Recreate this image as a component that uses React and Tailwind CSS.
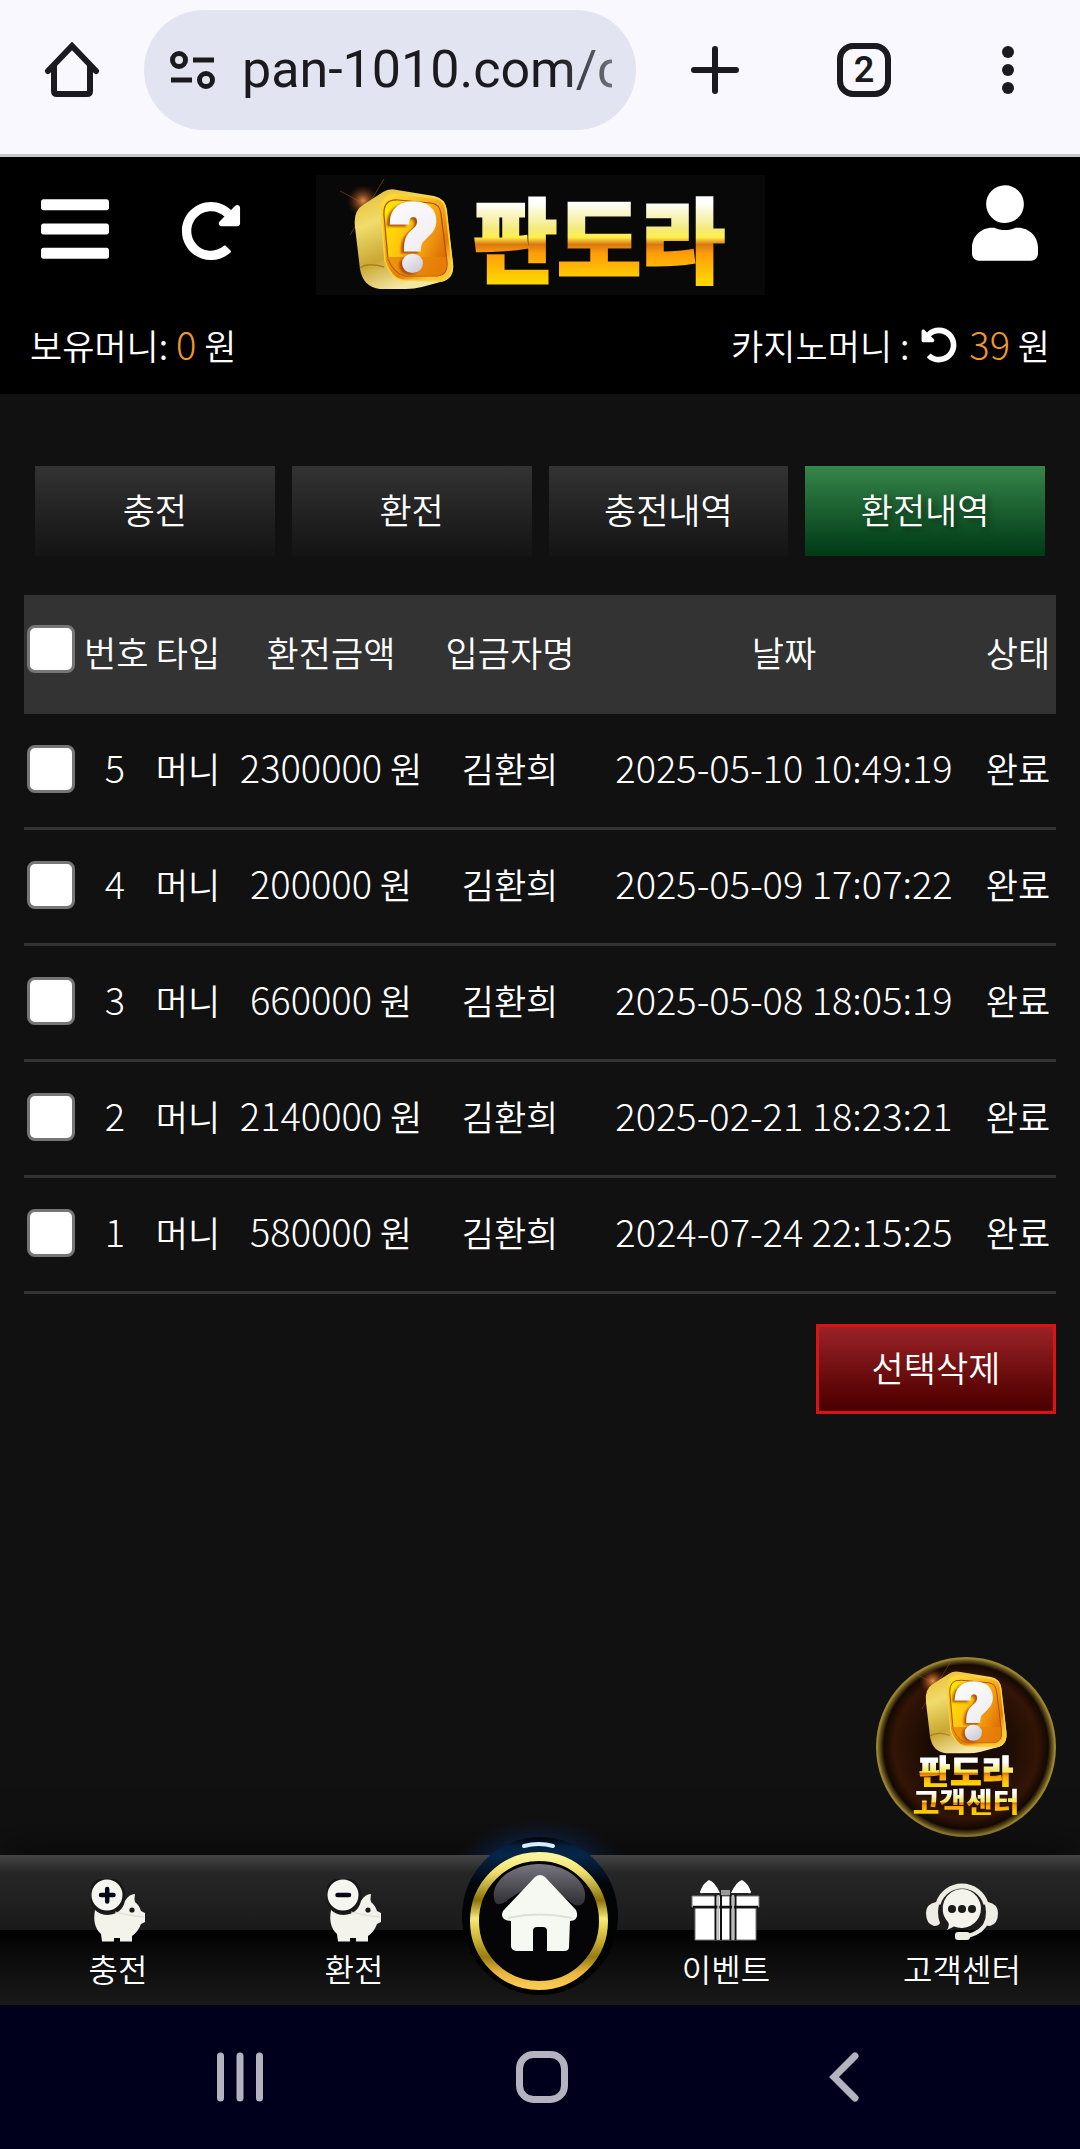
import { useState } from "react";
import { FaBars, FaRedoAlt, FaUndoAlt, FaUser } from "react-icons/fa";

const tabs = ["충전", "환전", "충전내역", "환전내역"];

const initialRows = [
  { id: 5, type: "머니", amount: 2300000, name: "김환희", date: "2025-05-10 10:49:19", status: "완료" },
  { id: 4, type: "머니", amount: 200000, name: "김환희", date: "2025-05-09 17:07:22", status: "완료" },
  { id: 3, type: "머니", amount: 660000, name: "김환희", date: "2025-05-08 18:05:19", status: "완료" },
  { id: 2, type: "머니", amount: 2140000, name: "김환희", date: "2025-02-21 18:23:21", status: "완료" },
  { id: 1, type: "머니", amount: 580000, name: "김환희", date: "2024-07-24 22:15:25", status: "완료" },
];

const goldText =
  "bg-clip-text text-transparent font-black bg-[linear-gradient(180deg,#ffffff_22%,#f3ea7a_45%,#fff04a_52%,#d9780f_58%,#ff9d0a_66%,#ffd400_90%)]";

const QuestionCube = ({ id, className }) => (
  <svg viewBox="-16 -10 118 112" className={className} aria-hidden="true">
    <defs>
      <linearGradient id={`${id}-side`} x1="0" y1="0" x2="0.4" y2="1">
        <stop offset="0" stopColor="#e8b92c" />
        <stop offset="0.35" stopColor="#f0dc6c" />
        <stop offset="0.7" stopColor="#c9a732" />
        <stop offset="1" stopColor="#f5e6a4" />
      </linearGradient>
      <linearGradient id={`${id}-rim`} x1="0" y1="0" x2="0.6" y2="1">
        <stop offset="0" stopColor="#ffe43a" />
        <stop offset="0.45" stopColor="#f7a91b" />
        <stop offset="0.8" stopColor="#e37a08" />
        <stop offset="1" stopColor="#ffc637" />
      </linearGradient>
      <linearGradient id={`${id}-face`} x1="0" y1="0.2" x2="1" y2="0.7">
        <stop offset="0" stopColor="#ffe600" />
        <stop offset="0.5" stopColor="#fdb813" />
        <stop offset="1" stopColor="#dd6a06" />
      </linearGradient>
      <linearGradient id={`${id}-mark`} x1="0" y1="0" x2="0.3" y2="1">
        <stop offset="0" stopColor="#ffffff" />
        <stop offset="0.7" stopColor="#f1eff2" />
        <stop offset="1" stopColor="#b9bdcc" />
      </linearGradient>
      <radialGradient id={`${id}-flare`}>
        <stop offset="0" stopColor="#ff9d4d" stopOpacity="0.9" />
        <stop offset="1" stopColor="#7a2f08" stopOpacity="0" />
      </radialGradient>
    </defs>
    <circle cx="9" cy="12" r="16" fill={`url(#${id}-flare)`} />
    <path d="M-14 2 24 22M30 -10 -4 46" stroke="#b0602c" strokeWidth="0.7" opacity="0.7" />
    <path
      d="M1 38Q-1 22 9 16L29 3Q35 -1 43 1L80 7Q91 9 93 21L99 74Q101 88 90 92L68 98Q60 100 52 100L26 100Q9 98 6 80Z"
      fill={`url(#${id}-side)`}
    />
    <path d="M27 23Q26 4 43 5L80 9Q91 10 92 22L98 74Q99 90 87 92L48 91Q37 89 31 72Z" fill={`url(#${id}-rim)`} stroke="#f8d536" strokeWidth="1.5" />
    <path d="M30 26Q29 10 44 11L77 14Q86 15 87 25L93 73Q94 86 84 87L51 87Q40 84 34 70Z" fill={`url(#${id}-face)`} stroke="#a9500a" strokeWidth="1.2" />
    <path d="M32 68L92 68 93 74Q93 86 84 87L51 87Q40 84 34 70Z" fill="#e8810a" opacity="0.75" />
    <path d="M6 79Q14 73 30 78" fill="none" stroke="#a88420" strokeWidth="1.5" />
    <text
      x="60"
      y="81"
      textAnchor="middle"
      fill={`url(#${id}-mark)`}
      stroke={`url(#${id}-mark)`}
      strokeWidth="4"
      className="font-[Roboto,sans-serif] font-black text-[92px] drop-shadow-[-3px_2px_1px_#b04e0e]"
    >
      ?
    </text>
  </svg>
);

const PigIcon = ({ minus }) => (
  <svg viewBox="0 0 54 63" className="w-[54px] h-[63px]" aria-hidden="true">
    <path
      d="M4 31Q9 36 17 36Q31 35 34 22Q38 15 44 15Q43 20 44 23Q48 26 50 32L54 34V43L50 45Q47 53 41 57V62.500H29V59H23V62.500H11L10 55Q1 47 4 31Z"
      fill="#f3f3ec"
    />
    <path d="M24 33Q40 37 53 38" fill="none" stroke="#dcdcd4" strokeWidth="1.2" />
    <circle cx="41" cy="31" r="2.600" fill="#1a1a1a" />
    <circle cx="16" cy="16" r="18" fill="#161616" />
    <circle cx="16" cy="16" r="15.500" fill="#f6f6f0" />
    <path d={minus ? "M10.500 16H22" : "M10 16H22.500M16.200 10V22.500"} stroke="#06061a" strokeWidth="4.500" strokeLinecap="round" />
  </svg>
);

const GiftIcon = () => (
  <svg viewBox="0 0 70 63" className="w-[70px] h-[63px]" aria-hidden="true">
    <path d="M9 13Q12 4 18 1Q24 3 29 14H12Q9 15 9 13ZM60 13Q57 4 51 1Q45 3 40 14H57Q60 15 60 13Z" fill="#fff" />
    <rect x="30" y="11" width="9" height="5" fill="#999" />
    <path d="M1 17H68V28H1Z" fill="#fff" stroke="#777" strokeWidth="1" />
    <path d="M4 29H65V61H4Z" fill="#fff" stroke="#777" strokeWidth="1" />
    <path d="M2 28H67" stroke="#111" strokeWidth="2.500" />
    <path d="M24.500 16V61M44.500 16V61M30 16V61M39.500 16V61" stroke="#111" strokeWidth="2" />
    <path d="M27.300 16V61M42 16V61" stroke="#bbb" strokeWidth="2" />
  </svg>
);

const SupportIcon = () => (
  <svg viewBox="0 0 72 63" className="w-[72px] h-[63px]" aria-hidden="true">
    <path d="M12 25A25 25 0 0 1 60 25" fill="none" stroke="#edede4" strokeWidth="5" />
    <path d="M61 42Q57 53 42 57" fill="none" stroke="#edede4" strokeWidth="4" />
    <path d="M10 23H14Q10 33 14 44Q13 47 8 47Q0 45 0 34Q0 25 10 23ZM62 23H58Q62 33 58 44Q59 47 64 47Q72 45 72 34Q72 25 62 23Z" fill="#edede4" />
    <rect x="29" y="53" width="15" height="8" rx="3" fill="#edede4" />
    <path d="M36 10A19.500 19.500 0 1 1 28 47.500L21 51Q24 46 22 43A19.500 19.500 0 0 1 36 10Z" fill="#f4f4ec" />
    <circle cx="26" cy="30" r="4" fill="#1b1b1b" />
    <circle cx="36" cy="30" r="4" fill="#1b1b1b" />
    <circle cx="46" cy="30" r="4" fill="#1b1b1b" />
  </svg>
);

const HomeBadge = () => (
  <svg viewBox="0 0 240 185" className="w-[240px] h-[185px] shrink-0" aria-hidden="true">
    <defs>
      <radialGradient id="home-glow">
        <stop offset="0.500" stopColor="#0c2a60" stopOpacity="0.8" />
        <stop offset="1" stopColor="#0c1c3c" stopOpacity="0" />
      </radialGradient>
      <linearGradient id="home-disc" x1="0" y1="0" x2="0" y2="1">
        <stop offset="0" stopColor="#020306" />
        <stop offset="0.060" stopColor="#04203e" />
        <stop offset="0.120" stopColor="#06264a" />
        <stop offset="0.300" stopColor="#020509" />
        <stop offset="1" stopColor="#000" />
      </linearGradient>
      <linearGradient id="home-ring" x1="0" y1="0" x2="0" y2="1">
        <stop offset="0" stopColor="#fbf49a" />
        <stop offset="0.120" stopColor="#efe070" />
        <stop offset="0.340" stopColor="#8c7208" />
        <stop offset="0.480" stopColor="#f6ea78" />
        <stop offset="0.600" stopColor="#d8c244" />
        <stop offset="0.780" stopColor="#987c10" />
        <stop offset="0.900" stopColor="#e8b440" />
        <stop offset="1" stopColor="#f8ca50" />
      </linearGradient>
      <linearGradient id="home-gloss" x1="0" y1="0" x2="0" y2="1">
        <stop offset="0" stopColor="#77757d" />
        <stop offset="1" stopColor="#2e2d33" />
      </linearGradient>
      <clipPath id="home-above">
        <rect width="240" height="35" />
      </clipPath>
    </defs>
    <ellipse cx="120" cy="60" rx="92" ry="62" fill="url(#home-glow)" clipPath="url(#home-above)" />
    <ellipse cx="120" cy="96" rx="78" ry="79" fill="url(#home-disc)" />
    <path d="M104 26Q119 22 133 26" fill="none" stroke="#d6f0ff" strokeWidth="4" strokeLinecap="round" />
    <circle cx="119" cy="101" r="64.500" fill="#050508" stroke="url(#home-ring)" strokeWidth="9" />
    <path d="M75 82C68 64 90 44 119 44S171 64 164 82Q158 90 148 80L120 60 90 78Q79 88 75 82Z" fill="url(#home-gloss)" />
    <path d="M115 57Q120 53 125 57L156 90Q160 100 150 101L149 127Q149 131 144 131H127V111Q127 107 123 107H117Q113 107 113 111V131H96Q91 130 91 126V101Q79 100 83 91Z" fill="#f6f8f2" />
    <path d="M88 98Q120 91 152 98" fill="none" stroke="#dcdfd8" strokeWidth="2" />
  </svg>
);

const BottomItem = ({ label, children }) => (
  <a href="#" className="flex flex-col items-center gap-2 pt-6">
    {children}
    <span className="text-[32px] leading-9">{label}</span>
  </a>
);

const BrowserBar = () => (
  <div className="flex items-center bg-[#f9f8ff] border-b-3 border-[#c6c5cc] h-[157px] pl-11 pr-[66px] pb-[14px] text-[#1b1b1f]">
    <button aria-label="홈">
      <svg viewBox="0 0 56 56" className="w-14 h-14" fill="none" stroke="currentColor" strokeWidth="6">
        <path d="M4 29 28 4 52 29" strokeLinecap="round" />
        <path d="M10 23V49Q10 52 13 52H43Q46 52 46 49V23" />
      </svg>
    </button>
    <div className="flex flex-1 min-w-0 items-center gap-[26px] ml-11 h-[120px] rounded-full bg-[#e2e4f1] pl-[26px] pr-6">
      <svg viewBox="0 0 46 40" className="w-[46px] h-10 shrink-0" fill="none" stroke="currentColor" strokeWidth="5">
        <circle cx="9" cy="10" r="6.500" />
        <circle cx="36" cy="30" r="6.500" />
        <path d="M23 10H44M1 30H22" />
      </svg>
      <input
        aria-label="주소"
        defaultValue="pan-1010.com/c"
        className="min-w-0 flex-1 bg-transparent outline-none text-[52px] font-normal font-[Roboto,sans-serif] mask-r-from-85% mask-r-to-120%"
      />
    </div>
    <button aria-label="새 탭" className="ml-[54px] shrink-0">
      <svg viewBox="0 0 50 50" className="w-[50px] h-[50px]" stroke="currentColor" strokeWidth="6" strokeLinecap="round">
        <path d="M25 4V46M4 25H46" />
      </svg>
    </button>
    <button className="ml-[97px] shrink-0 w-[54px] h-[54px] rounded-2xl border-6 border-current text-4xl leading-none font-semibold font-[Roboto,sans-serif] flex items-center justify-center">
      2
    </button>
    <button aria-label="메뉴" className="ml-[111px] flex flex-col gap-[6px]">
      <span className="w-3 h-3 rounded-full bg-current" />
      <span className="w-3 h-3 rounded-full bg-current" />
      <span className="w-3 h-3 rounded-full bg-current" />
    </button>
  </div>
);

const Digits = ({ children, className = "" }) => (
  <span className={`text-[38px] leading-10 font-light ${className}`}>{children}</span>
);

const checkboxClass =
  "appearance-none block w-12 h-12 ml-[3px] rounded-lg border-3 border-[#767676] bg-white checked:bg-blue-600";

export default function App() {
  const [rows, setRows] = useState(initialRows);
  const [selected, setSelected] = useState([]);
  const [activeTab, setActiveTab] = useState("환전내역");

  const toggle = (id) =>
    setSelected((prev) => (prev.includes(id) ? prev.filter((v) => v !== id) : [...prev, id]));

  const toggleAll = (e) => setSelected(e.target.checked ? rows.map((r) => r.id) : []);

  const deleteSelected = () => {
    setRows(rows.filter((r) => !selected.includes(r.id)));
    setSelected([]);
  };

  return (
    <div className="min-h-screen flex flex-col bg-[#111] text-white text-[35px] font-[350] font-['Noto_Sans_CJK_KR',sans-serif]">
      <BrowserBar />

      {/* Header */}
      <header className="bg-black pt-[18px]">
        <div className="grid grid-cols-[1fr_auto_1fr] items-center">
          <div className="flex items-center gap-[72px] pl-[41px] mb-3">
            <button aria-label="전체 메뉴">
              <FaBars className="w-[68px] h-[78px]" />
            </button>
            <button aria-label="새로고침" className="mt-1">
              <FaRedoAlt className="w-[60px] h-[60px]" />
            </button>
          </div>
          <a href="#" className="flex items-center gap-[18px] w-[449px] h-[120px] bg-[#080808] pl-[22px]">
            <QuestionCube id="logo" className="w-[118px] h-[112px] shrink-0" />
            <span className={`${goldText} text-[91px] leading-[116px] [-webkit-text-stroke:3px_transparent]`}>판도라</span>
          </a>
          <button aria-label="내 정보" className="justify-self-end mr-[42px] mb-6">
            <FaUser className="w-[66px] h-[76px]" />
          </button>
        </div>
        <div className="flex justify-between px-[30px] pt-6 pb-[23px] leading-[52px]">
          <p>
            보유머니: <Digits className="text-[#f0982c]">0</Digits> 원
          </p>
          <p className="flex items-center gap-3">
            카지노머니 :
            <button aria-label="카지노머니 갱신">
              <FaUndoAlt className="w-9 h-9" />
            </button>
            <span>
              <Digits className="text-[#f0982c]">39</Digits> 원
            </span>
          </p>
        </div>
      </header>

      <main className="relative flex-1 px-6 pt-[72px] pb-[200px]">
        {/* Tabs */}
        <nav className="grid grid-cols-4 gap-[17px] px-[11px]">
          {tabs.map((tab) => (
            <button
              key={tab}
              onClick={() => setActiveTab(tab)}
              className={`h-[90px] pb-1 bg-linear-to-b ${
                tab === activeTab
                  ? "from-[#35864a] to-[#003a16] text-shadow-[3px_3px_6px_rgba(0,0,0,0.5)]"
                  : "from-[#333] to-[#141414]"
              }`}
            >
              {tab}
            </button>
          ))}
        </nav>

        {/* History */}
        <table className="table-fixed w-full mt-[39px] text-center border-separate border-spacing-0 whitespace-nowrap">
          <colgroup>
            <col className="w-[60px]" />
            <col className="w-[62px]" />
            <col className="w-[84px]" />
            <col className="w-[202px]" />
            <col className="w-[156px]" />
            <col />
            <col className="w-[76px]" />
          </colgroup>
          <thead>
            <tr className="h-[119px] bg-[#333] [&>th]:font-[350] [&>th]:pb-1">
              <th>
                <input
                  type="checkbox"
                  aria-label="전체 선택"
                  checked={rows.length > 0 && selected.length === rows.length}
                  onChange={toggleAll}
                  className={`${checkboxClass} mb-2`}
                />
              </th>
              <th>번호</th>
              <th>타입</th>
              <th>환전금액</th>
              <th>입금자명</th>
              <th>날짜</th>
              <th>상태</th>
            </tr>
          </thead>
          <tbody>
            {rows.map((row) => (
              <tr key={row.id} className="h-[116px] [&>td]:border-b-3 [&>td]:border-[#333] [&>td]:pb-1">
                <td>
                  <input
                    type="checkbox"
                    aria-label={`${row.id}번 선택`}
                    checked={selected.includes(row.id)}
                    onChange={() => toggle(row.id)}
                    className={checkboxClass}
                  />
                </td>
                <td>
                  <Digits>{row.id}</Digits>
                </td>
                <td>{row.type}</td>
                <td>
                  <Digits>{row.amount}</Digits> 원
                </td>
                <td>{row.name}</td>
                <td>
                  <Digits>{row.date}</Digits>
                </td>
                <td>{row.status}</td>
              </tr>
            ))}
          </tbody>
        </table>

        <div className="flex justify-end mt-[30px]">
          <button
            onClick={deleteSelected}
            className="w-60 h-[90px] pb-1 border-3 border-[#d91414] bg-linear-to-b from-[#9b2226] to-[#4a0000]"
          >
            선택삭제
          </button>
        </div>

        {/* Floating support button */}
        <a
          href="#"
          className="absolute right-6 bottom-[18px] w-[180px] h-[180px] rounded-full border-2 border-[#9a8430] bg-[radial-gradient(circle,#190a04_30%,#331505_58%,#140902_66%,#8a7428_71%)] flex flex-col items-center"
        >
          <QuestionCube id="float" className="w-[97px] h-[92px] mt-1 mr-3 shrink-0" />
          <span className={`${goldText} text-[34px] leading-8 [-webkit-text-stroke:1px_transparent]`}>판도라</span>
          <span className={`${goldText} text-[29px] leading-7`}>고객센터</span>
        </a>
      </main>

      {/* Bottom menu */}
      <nav className="relative grid grid-cols-[1fr_1fr_136px_1fr_1fr] h-[150px] bg-[linear-gradient(180deg,#444_0%,#262626_12%,#1a1a1a_50%,#000_50%,#0a0a0a_65%,#191919_100%)] shadow-[0_-8px_40px_rgba(0,0,0,0.5)]">
        <BottomItem label="충전">
          <PigIcon />
        </BottomItem>
        <BottomItem label="환전">
          <PigIcon minus />
        </BottomItem>
        <a href="#" aria-label="홈으로" className="flex justify-center items-end h-[150px]">
          <HomeBadge />
        </a>
        <BottomItem label="이벤트">
          <GiftIcon />
        </BottomItem>
        <BottomItem label="고객센터">
          <SupportIcon />
        </BottomItem>
      </nav>

      {/* System navigation */}
      <div className="relative flex items-center justify-around h-36 pl-[89px] pr-[85px] bg-[#00001c] text-[#b3b2bf]">
        <button aria-label="최근 앱">
          <svg viewBox="0 0 52 52" className="w-13 h-13" stroke="currentColor" strokeWidth="7" strokeLinecap="round">
            <path d="M6.500 5V47M26 5V47M45.500 5V47" />
          </svg>
        </button>
        <button aria-label="홈 화면">
          <svg viewBox="0 0 52 52" className="w-13 h-13" fill="none" stroke="currentColor" strokeWidth="7">
            <rect x="3.500" y="3.500" width="45" height="45" rx="14" />
          </svg>
        </button>
        <button aria-label="뒤로">
          <svg viewBox="0 0 52 52" className="w-13 h-13" fill="none" stroke="currentColor" strokeWidth="7" strokeLinecap="round">
            <path d="M37 5 16 26 37 47" />
          </svg>
        </button>
      </div>
    </div>
  );
}
